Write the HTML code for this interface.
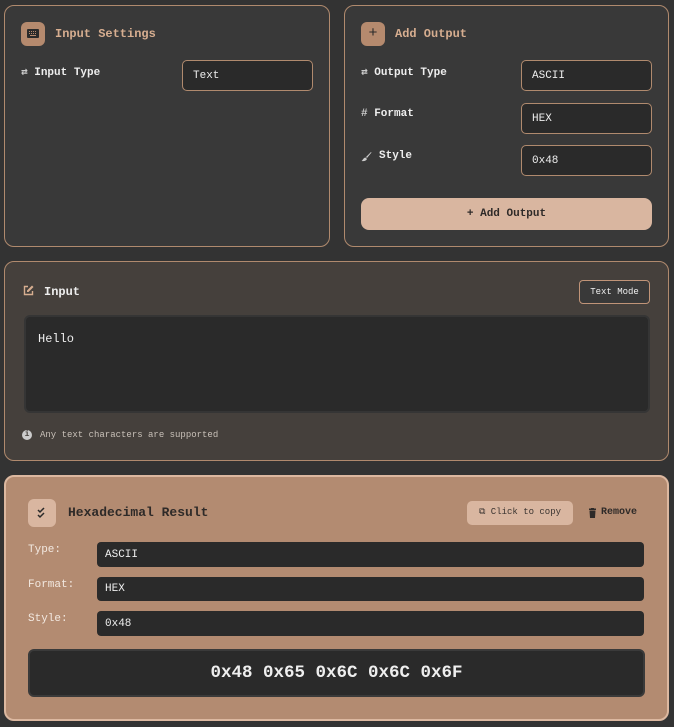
<!DOCTYPE html>
<html><head><meta charset="utf-8"><style>
*{box-sizing:border-box;margin:0;padding:0}
body{width:674px;height:727px;background:#333333;font-family:"Liberation Mono",monospace;position:relative;overflow:hidden;color:#e8e2dc}
.a{position:absolute}
.panel{position:absolute;background:#393939;border:1px solid #b08a6e;border-radius:10px}
.ib{position:absolute;width:24px;height:24px;border-radius:6px;background:#b58a6e;color:#2a2a2a;font-size:13px;text-align:center;line-height:24px}
.ttl{position:absolute;font-size:12px;color:#d7ae90;font-weight:bold}
.lbl{position:absolute;font-size:11px;color:#eee;font-weight:bold}
.ic{color:#ccc;font-size:11px;font-weight:bold}
.sel{position:absolute;background:#2a2a2a;border:1px solid #b08a6e;border-radius:5px;font-size:11px;color:#eee;padding-left:10px;line-height:30px;height:31px;width:131px}
.rf{position:absolute;left:97px;width:547px;background:#2a2a2a;border-radius:4px;font-size:11px;color:#eee;padding-left:8px}
.rl{position:absolute;left:28px;font-size:11px;color:#f2e8e0}
</style></head><body>
<div class="panel" style="left:4px;top:5px;width:326px;height:242px"></div>
<div class="ib" style="left:21px;top:22px"><svg width="12" height="9" viewBox="0 0 12 9" style="margin-top:7px"><rect x="0" y="0" width="12" height="9" rx="1" fill="#2a2a2a"/><g fill="#b58a6e"><rect x="2" y="2" width="1" height="1"/><rect x="4" y="2" width="1" height="1"/><rect x="6" y="2" width="1" height="1"/><rect x="8" y="2" width="1" height="1"/><rect x="2" y="4" width="1" height="1"/><rect x="4" y="4" width="1" height="1"/><rect x="6" y="4" width="1" height="1"/><rect x="8" y="4" width="1" height="1"/><rect x="3" y="6" width="6" height="1"/></g></svg></div>
<div class="ttl" style="left:55px;top:27px">Input Settings</div>
<div class="lbl" style="left:21px;top:65px"><span class="ic">⇄</span> Input Type</div>
<div class="sel" style="left:182px;top:60px">Text</div>

<div class="panel" style="left:344px;top:5px;width:325px;height:242px"></div>
<div class="ib" style="left:361px;top:22px;font-size:15px">+</div>
<div class="ttl" style="left:395px;top:27px">Add Output</div>
<div class="lbl" style="left:361px;top:65px"><span class="ic">⇄</span> Output Type</div>
<div class="lbl" style="left:361px;top:108px"><span class="ic">#</span> Format</div>
<svg class="a" style="left:361px;top:151px" width="11" height="11" viewBox="0 0 11 11"><path d="M10 1 L5 6 L6 7 L10.5 1.5Z M4.5 6.5 L6 8 C5 10 3 10.5 0.5 10 C2 9 2 7 4.5 6.5Z" fill="#ccc"/></svg>
<div class="lbl" style="left:379px;top:150px">Style</div>
<div class="sel" style="left:521px;top:60px">ASCII</div>
<div class="sel" style="left:521px;top:103px">HEX</div>
<div class="sel" style="left:521px;top:145px">0x48</div>
<div class="a" style="left:361px;top:198px;width:291px;height:32px;background:#d9b6a0;border-radius:8px;text-align:center;line-height:32px;font-size:11px;font-weight:bold;color:#2e2a28">+ Add Output</div>

<div class="panel" style="left:4px;top:261px;width:665px;height:200px;background:#45403c"></div>
<svg class="a" style="left:23px;top:285px" width="11" height="11" viewBox="0 0 11 11"><path d="M5 1.5H1.5V9.5H9.5V6" fill="none" stroke="#d7ae90" stroke-width="1.4"/><path d="M9 0.5L10.5 2L5.5 7H4V5.5Z" fill="#d7ae90"/></svg>
<div class="a" style="left:44px;top:285px;font-size:12px;font-weight:bold;color:#eee">Input</div>
<div class="a" style="left:579px;top:280px;width:71px;height:24px;border:1px solid #c09478;border-radius:4px;background:#393939;font-size:9px;text-align:center;line-height:22px;color:#eee">Text Mode</div>
<div class="a" style="left:24px;top:315px;width:626px;height:98px;background:#2a2a2a;border:2px solid #353535;border-radius:6px;padding:15px 12px;font-size:12px;color:#eee">Hello</div>
<div class="a" style="left:22px;top:430px;width:10px;height:10px;border-radius:50%;background:#ccc;color:#45403c;font-size:8px;text-align:center;line-height:10px;font-weight:bold">i</div>
<div class="a" style="left:40px;top:430px;font-size:9px;color:#c8c0b8">Any text characters are supported</div>

<div class="a" style="left:4px;top:475px;width:665px;height:246px;background:#b38b71;border:2px solid #dcb8a0;border-radius:10px"></div>
<div class="a" style="left:28px;top:499px;width:28px;height:28px;border-radius:6px;background:#d9b6a0"></div>
<svg class="a" style="left:37px;top:507px" width="10" height="12" viewBox="0 0 10 12"><path d="M1 3L3 5L7 1M1 8L3 10L7 6" fill="none" stroke="#2a2a2a" stroke-width="1.5"/></svg>
<div class="a" style="left:68px;top:505px;font-size:13px;font-weight:bold;color:#2e2a28">Hexadecimal Result</div>
<div class="a" style="left:467px;top:501px;width:106px;height:24px;border-radius:5px;background:#d9b6a0;font-size:9px;line-height:23px;text-align:center;color:#3a3430">⧉ Click to copy</div>
<svg class="a" style="left:589px;top:508px" width="7" height="10" viewBox="0 0 7 10"><rect x="0" y="0.5" width="7" height="1.5" fill="#2e2a28"/><rect x="2" y="0" width="3" height="1" fill="#2e2a28"/><path d="M0.5 2.5H6.5L6 10H1Z" fill="#2e2a28"/></svg>
<div class="a" style="left:601px;top:507px;font-size:10px;color:#2e2a28;font-weight:bold">Remove</div>
<div class="rl" style="top:544px">Type:</div>
<div class="rl" style="top:579px">Format:</div>
<div class="rl" style="top:613px">Style:</div>
<div class="rf" style="top:542px;height:25px;line-height:26px">ASCII</div>
<div class="rf" style="top:577px;height:24px;line-height:25px">HEX</div>
<div class="rf" style="top:611px;height:25px;line-height:26px">0x48</div>
<div class="a" style="left:28px;top:649px;width:617px;height:48px;background:#2a2a2a;border:2px solid #3a3a3a;border-radius:6px;text-align:center;line-height:44px;font-size:17.5px;font-weight:bold;color:#eee">0x48 0x65 0x6C 0x6C 0x6F</div>
</body></html>
